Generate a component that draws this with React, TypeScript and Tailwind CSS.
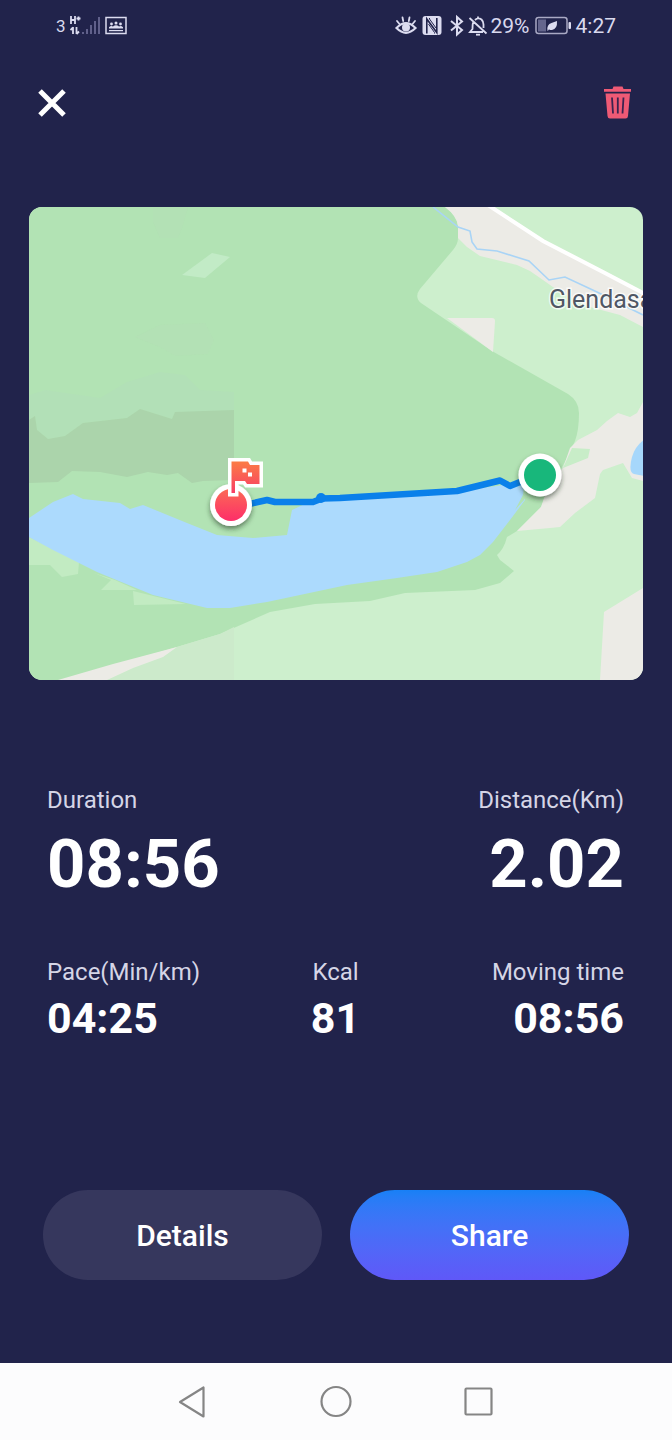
import React from "react";

function SignalIcons() {
  return (
    <div className="flex items-center">
      <span className="text-[17px] leading-5">3</span>
      <svg className="ml-1 h-6 w-8" viewBox="0 0 32 24" aria-label="Mobile signal" role="img">
        <g fill="none" stroke="#dcdcf0" strokeWidth="1.8">
          <path d="M1 2v8M5 2v8M1 6h4M6.500 4.500h4M8.500 2.500v4" />
          <path d="M3 13v7M0.500 16 3 13.500M6.500 13v7M9 17.500 6.500 20" />
        </g>
        <g fill="#60608a">
          <rect x="12" y="18" width="2" height="2" />
          <rect x="16" y="15" width="2" height="5" />
          <rect x="20" y="11" width="2" height="9" />
          <rect x="24" y="7" width="2" height="13" />
          <rect x="28" y="3" width="2" height="17" />
        </g>
      </svg>
      <svg className="ml-0.5 h-5 w-6" viewBox="0 0 24 20" aria-label="Hotspot" role="img">
        <rect x="2" y="1.500" width="20" height="16" fill="none" stroke="#dcdcf0" strokeWidth="1.5" />
        <g fill="#dcdcf0">
          <circle cx="7.500" cy="8" r="1.400" />
          <circle cx="12" cy="7" r="1.500" />
          <circle cx="16.500" cy="8" r="1.400" />
          <path d="M5 12.500v-1.200q2-2.300 4-.8 3-2.300 6 0 2-1.500 4 .8v1.200z" />
          <rect x="5" y="14" width="14" height="1.200" />
        </g>
      </svg>
    </div>
  );
}

function StatusBar() {
  return (
    <div className="flex h-[52px] items-center justify-between pr-14 pl-14 text-[#d9d9ee]">
      <SignalIcons />
      <div className="flex items-center gap-[3px] text-[21px] leading-6">
        <svg className="h-6 w-6" viewBox="0 0 24 24" role="img" aria-label="Eye comfort">
          <g fill="none" stroke="#dcdcf0" strokeWidth="2.200" strokeLinecap="round">
            <path d="M2.500 14q9.500-9.500 19 0-9.500 9.500-19 0z" />
            <path d="M3 7l2.500 3M8.500 3.500l.7 3.500M15.500 3.500l-.7 3.500M21 7l-2.500 3" strokeWidth="1.800" />
          </g>
          <circle cx="12" cy="13.500" r="4" fill="#dcdcf0" />
        </svg>
        <svg className="ml-px h-6 w-5" viewBox="0 0 20 24" role="img" aria-label="NFC">
          <rect x="0.500" y="2" width="19" height="19" rx="3" fill="#dcdcf0" />
          <path d="M4.800 19.500V5l10 13.500V4" fill="none" stroke="#21234b" strokeWidth="1.600" />
          <path d="M7.500 4v1L14 14M12.500 19.500v-1L6.500 10" fill="none" stroke="#21234b" strokeWidth="1" />
        </svg>
        <svg className="ml-1 h-6 w-4" viewBox="0 0 16 24" role="img" aria-label="Bluetooth">
          <path d="M2 7l11 9-5 4.500V3L13 7.500l-11 9" fill="none" stroke="#dcdcf0" strokeWidth="2" />
        </svg>
        <svg className="h-6 w-5" viewBox="0 0 20 24" role="img" aria-label="Notifications muted">
          <g fill="none" stroke="#dcdcf0" strokeWidth="1.800">
            <path d="M7 6q3-3 6.500-.5 2 2 2 5V14M5 8.500q-.5 2-.5 6.500L2 18h13M10 2.500v2M1.500 4l17 15.500" />
            <path d="M8 20.700h4" />
          </g>
        </svg>
        <span>29%</span>
        <svg className="mx-0.5 h-6 w-9" viewBox="0 0 36 24" role="img" aria-label="Battery saver">
          <rect x="1" y="3.500" width="31" height="16" rx="2.500" fill="none" stroke="#a9a9c4" strokeWidth="1.500" />
          <rect x="3" y="5.500" width="8" height="12" fill="#65668d" />
          <rect x="33.500" y="8" width="2.500" height="7" rx="1" fill="#dcdcf0" />
          <path d="M12.500 16.500q-1-6 4-7.500l5.500-2q.5 8-5 9-2 .3-3-.8l-1.200 1.800z" fill="#dcdcf0" />
        </svg>
        <span>4:27</span>
      </div>
    </div>
  );
}

function RouteMap() {
  return (
    <svg
      className="block w-full rounded-[13px] bg-[#cdefcd]"
      viewBox="29 207 614 473"
      role="img"
      aria-label="Map of the recorded route"
    >
      <defs>
        <linearGradient id="finish" x1="0" y1="0" x2="0" y2="1">
          <stop offset="0" stopColor="#fb6a55" />
          <stop offset="1" stopColor="#fd2e69" />
        </linearGradient>
        <linearGradient id="flag" x1="0" y1="0" x2="0" y2="1">
          <stop offset="0" stopColor="#fb7c45" />
          <stop offset="1" stopColor="#f83e66" />
        </linearGradient>
        <filter id="pinShadow" x="-40%" y="-40%" width="180%" height="190%">
          <feDropShadow dx="0" dy="3" stdDeviation="2.500" floodColor="#203020" floodOpacity=".55" />
        </filter>
      </defs>

      {/* Land */}
      <path fill="#b2e3b4" d="M29 207H445Q457 216 458 226V238Q458 244 453 250L420 289Q414 297 421 303L492 351 568 394Q579 401 579 413 579 430 575 441L569 454 541 507 517 531 507 537Q504 549 497 555L500 560 514 571 500 583 475 590 405 593 370 601 315 604 270 612 220 634 160 652 60 680H29Z" />
      <path fill="#cceacb" d="M107 680 133 668 163 657 177 647 220 634 234 627V680Z" />
      <path fill="#b3dfb6" d="M153 207H188L183 225 178 238H160L153 222ZM135 337 160 325 205 323 214 340 208 354 175 356 160 347Z" opacity=".5" />
      <path fill="#b2e0b7" d="M45 390 100 398 127 382 160 372 185 375 200 390 234 392V412L175 412 172 419 140 409 127 418 83 423 65 436 48 439 37 430 35 416 29 420V395Z" />
      <path fill="#abd4ab" d="M29 420 35 416 37 430 48 439 65 436 83 423 127 418 140 409 172 419 175 412 234 410V480L203 481 192 483 178 473 167 475 148 472 127 477 100 472 72 471 58 482 29 483Z" />
      <path fill="#c2ebc6" d="M182 275 212 253 230 257 205 278Z" />
      <path fill="#c2ebc2" d="M29 537 53 549 79 562 78 574 62 577 50 565H29ZM94 573 115 580 137 590H101L111 580ZM133 591 186 604 134 605Z" />
      <path fill="#ecebe6" d="M58 680 113 664 177 647 163 657 133 668 107 680Z" />

      {/* Valley and village clearings */}
      <path fill="#ecebe6" d="M445 207H490L543 242 603 273 643 295V327L620 315 590 307 560 292 543 280 530 271 517 265 480 256 467 247 458 238V226Q457 216 445 207Z" />
      <path fill="#ecebe6" d="M447 318 492 318Q495 318 495 321L493 352Z" />
      <path fill="#ecebe6" d="M570 448 578 440 597 430 607 421 618 413 630 417 637 413 643 402V481L632 478 623 463 603 470 600 474 595 498 575 513 560 527 550 528 517 531 530 518 541 507 550 480 563 468Z" />
      <path fill="#c8edc8" d="M572 448 590 449 588 458 563 468Z" />
      <path fill="#ecebe6" d="M643 588 604 612 600 680H643Z" />
      <path fill="none" stroke="#fff" strokeWidth="4" d="M488 205 543 241 603 272 645 294" />
      <path fill="none" stroke="#a9d4f6" strokeWidth="1.600" d="M433 207 458 227 470 231 472 242 477 249 497 251 529 261 549 280 565 277 597 292 643 315" />

      {/* Water */}
      <path fill="#acdafd" d="M29 518 53 502 73 494 83 499 120 503 130 509 143 505 187 523 217 535 253 538 287 535 292 510 307 503 340 498 457 491 497 486 525 481V500L510 520 493 542 480 555 467 562 437 572 397 578 347 585 267 602 230 608H207L153 595 97 572 53 550 29 537Z" />
      <path fill="#b2e3b4" d="M525 480 535 485 524 500 515 510 523 495Z" />
      <path fill="#a6d7fb" d="M645 439Q635 446 632 457 628 472 634 474L645 476Z" />

      <text
        x="549"
        y="308"
        fontSize="25"
        fill="#505764"
        stroke="#ffffff"
        strokeWidth="3"
        strokeOpacity=".75"
        paintOrder="stroke"
        className="font-[Roboto,sans-serif]"
      >
        Glendasa
      </text>

      {/* Route */}
      <path fill="none" stroke="#0a80ea" strokeWidth="6.500" strokeLinejoin="round" d="M245 505 267 500 275 502H313L322 498.500 340 498 457 491 500 480.500 510 486 525 480" />
      <circle cx="321" cy="498" r="5" fill="#0a80ea" />

      <g filter="url(#pinShadow)">
        <circle cx="540" cy="475" r="21.500" fill="#fff" />
      </g>
      <circle cx="540" cy="475" r="16" fill="#18b77b" />

      <g filter="url(#pinShadow)">
        <circle cx="231" cy="505" r="21" fill="#fff" />
      </g>
      <circle cx="231" cy="505" r="16" fill="url(#finish)" />
      <path
        d="M231.500 461.500H248L250 465H259.500V484H247L245 481H235V493H231.500Z"
        fill="url(#flag)"
        stroke="#fff"
        strokeWidth="7"
        paintOrder="stroke"
      />
      <path fill="#fff" d="M242.500 468.500h4v4h-4zM248 472.500h4v4h-4z" />
    </svg>
  );
}

function Stat({ label, value, align, large }: { label: string; value: string; align: string; large?: boolean }) {
  return (
    <div className={align}>
      <dt className="text-2xl leading-7 text-[#d5d5e6]">{label}</dt>
      <dd className={large ? "mt-[10px] text-[67px] leading-[80px] font-bold" : "mt-1 text-[43px] leading-[56px] font-bold"}>
        {value}
      </dd>
    </div>
  );
}

export default function App() {
  return (
    <div className="flex min-h-screen flex-col bg-[#21234b] font-[Roboto,sans-serif] text-white">
      <StatusBar />
      <header className="flex h-[102px] items-center justify-between px-9">
        <button type="button" aria-label="Close" className="flex h-8 w-8 items-center justify-center">
          <svg className="h-8 w-8" viewBox="0 0 32 32">
            <path d="M4 4l24 24M28 4l-24 24" stroke="#fff" strokeWidth="5" />
          </svg>
        </button>
        <button type="button" aria-label="Delete activity" className="flex h-9 w-9 items-center justify-center">
          <svg className="h-9 w-9" viewBox="0 0 36 36">
            <g fill="#ee5a75">
              <path d="M4 4h8.500l1-2.500h9l1 2.500H31V6.800H4z" />
              <path d="M5.500 8.500h24.500l-2 22.500q-.2 2.500-2.500 2.500H10q-2.300 0-2.500-2.500z" />
            </g>
            <path d="M12 12.500l1 16M17.800 12.500v16M23.500 12.500l-1 16" stroke="#3b2350" strokeWidth="1.800" fill="none" />
          </svg>
        </button>
      </header>

      <main className="flex grow flex-col">
        <div className="mt-[53px] px-[29px]">
          <RouteMap />
        </div>

        <dl className="mt-[106px] flex justify-between pr-12 pl-[47px]">
          <Stat label="Duration" value="08:56" align="text-left" large />
          <Stat label="Distance(Km)" value="2.02" align="text-right" large />
        </dl>
        <dl className="mt-[54px] grid grid-cols-3 pr-12 pl-[47px]">
          <Stat label="Pace(Min/km)" value="04:25" align="text-left" />
          <Stat label="Kcal" value="81" align="text-center" />
          <Stat label="Moving time" value="08:56" align="text-right" />
        </dl>

        <div className="mt-auto flex gap-7 px-[43px] pt-10 pb-[83px] text-[30px] font-medium">
          <button type="button" className="h-[90px] flex-1 rounded-full bg-[#36375d]">
            Details
          </button>
          <button type="button" className="h-[90px] flex-1 rounded-full bg-linear-to-b from-[#1780f6] to-[#5f58f8]">
            Share
          </button>
        </div>
      </main>

      <nav aria-label="System" className="flex h-[77px] items-center justify-center gap-[103px] bg-[#fcfcfd]">
        <button type="button" aria-label="Back">
          <svg className="h-10 w-10" viewBox="0 0 40 40" fill="none" stroke="#858585" strokeWidth="2.200" strokeLinejoin="round">
            <path d="M30.500 5.500v29L7 20z" />
          </svg>
        </button>
        <button type="button" aria-label="Home">
          <svg className="h-10 w-10" viewBox="0 0 40 40" fill="none" stroke="#858585" strokeWidth="2.200">
            <circle cx="20" cy="19.500" r="14.500" />
          </svg>
        </button>
        <button type="button" aria-label="Recent apps">
          <svg className="h-10 w-10" viewBox="0 0 40 40" fill="none" stroke="#858585" strokeWidth="2.200" strokeLinejoin="round">
            <rect x="6.500" y="6.500" width="26" height="26" rx="1" />
          </svg>
        </button>
      </nav>
    </div>
  );
}
